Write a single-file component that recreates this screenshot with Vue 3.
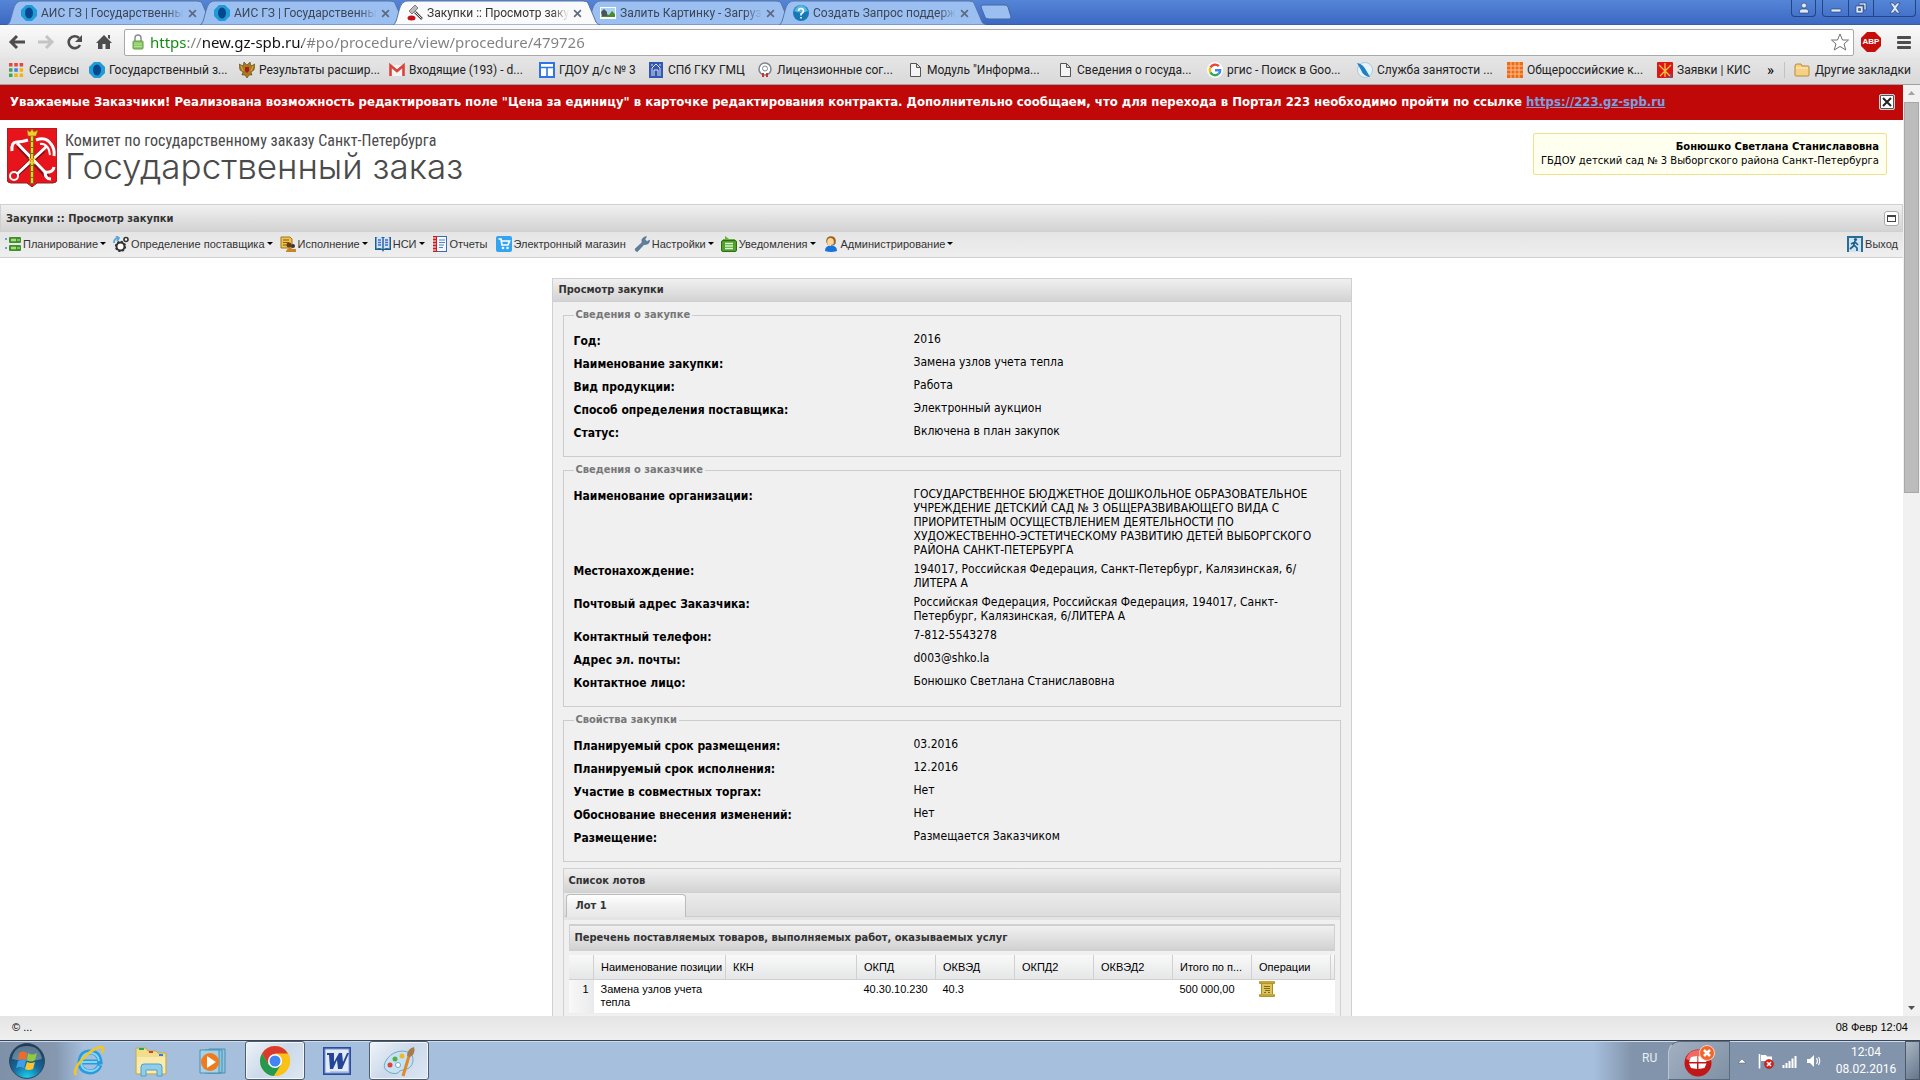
<template>
  <div class="screen">
    <header class="browser">
      <div class="tabstrip">
        <div v-for="(tab, i) in tabs" :key="i" class="tab" :class="{ active: tab.active }">
          <svg class="tab-shape" viewBox="0 0 207 25" preserveAspectRatio="none">
            <path d="M0 25C5 24 5 4 11 2Q12 1 15 1H190Q194 1 195 3L203 22Q204 24 207 25Z" />
          </svg>
          <svg class="ico" viewBox="0 0 16 16" v-html="icons[tab.icon]"></svg>
          <span class="tab-title">{{ tab.title }}</span>
          <button type="button" class="tab-close" aria-label="Закрыть">
            <svg viewBox="0 0 8 8"><path d="M1 1L7 7M7 1L1 7" /></svg>
          </button>
        </div>
        <button type="button" class="new-tab" aria-label="Новая вкладка">
          <svg viewBox="0 0 32 16">
            <path d="M3 1H25Q27 1 28 3L31 13Q31 15 29 15H9Q6 15 5 13L1 3Q1 1 3 1Z" />
          </svg>
        </button>
        <div class="window-controls">
          <button type="button" class="wc user" aria-label="Профиль">
            <svg viewBox="0 0 12 12"><circle cx="6" cy="3.5" r="2.5" /><path d="M1.5 11V9Q2 7 4 7H8Q10 7 10.500 9V11Z" /></svg>
          </button>
          <div class="wc-group">
            <button type="button" class="wc" aria-label="Свернуть">
              <svg viewBox="0 0 12 12"><rect x="1" y="7" width="10" height="3" rx="1" /></svg>
            </button>
            <button type="button" class="wc" aria-label="Восстановить">
              <svg viewBox="0 0 12 12"><path d="M4 1H11V8H9V3H4ZM1 4H8V11H1ZM3.500 6.500V8.500H5.500V6.500Z" fill-rule="evenodd" /></svg>
            </button>
            <button type="button" class="wc wide" aria-label="Закрыть окно">
              <svg viewBox="0 0 12 12"><path d="M1 1H4L6 3.500L8 1H11L7.500 6L11 11H8L6 8.500L4 11H1L4.500 6Z" /></svg>
            </button>
          </div>
        </div>
      </div>

      <div class="toolbar">
        <button type="button" class="nav" aria-label="Назад">
          <svg viewBox="0 0 18 16"><path d="M9 2L3 8L9 14M3 8H17" fill="none" stroke="#4d4d4d" stroke-width="3" /></svg>
        </button>
        <button type="button" class="nav" aria-label="Вперёд">
          <svg viewBox="0 0 18 16"><path d="M9 2L15 8L9 14M15 8H1" fill="none" stroke="#c4c4c4" stroke-width="3" /></svg>
        </button>
        <button type="button" class="nav" aria-label="Обновить">
          <svg viewBox="0 0 18 16"><path d="M14 11A6 6 0 1 1 13 4" fill="none" stroke="#4d4d4d" stroke-width="2.600" /><path d="M16 1V8H9Z" fill="#4d4d4d" /></svg>
        </button>
        <button type="button" class="nav" aria-label="Домой">
          <svg viewBox="0 0 18 16"><path d="M9 1L17 9H15V15H10.500V10H7.500V15H3V9H1ZM13 1H15V5L13 4Z" fill="#4d4d4d" /></svg>
        </button>
        <div class="omnibox">
          <svg class="lock" viewBox="0 0 12 16">
            <path d="M3 8V4Q3 1 6 1T9 4V8" fill="none" stroke="#8d8d8d" stroke-width="1.500" />
            <rect x="1" y="7" width="10" height="8" rx="1" fill="#8bcb66" stroke="#5b9d3c" />
            <path d="M2 10H10M2 12.500H10" stroke="#b6e09b" />
          </svg>
          <input class="url" type="text" aria-label="Адрес" value="https://new.gz-spb.ru/#po/procedure/view/procedure/479726" />
          <svg class="star" viewBox="0 0 20 18">
            <path d="M10 1L12.500 7H18.500L14 11L15.800 17L10 13.500L4.200 17L6 11L1.500 7H7.500Z" />
          </svg>
        </div>
        <button type="button" class="abp" aria-label="AdBlock"><span>ABP</span></button>
        <button type="button" class="burger" aria-label="Меню"><i></i><i></i><i></i></button>
      </div>

      <nav class="bookmarks">
        <a v-for="b in bookmarks" :key="b.title" href="#" class="bookmark" :class="b.size">
          <svg class="ico" viewBox="0 0 16 16" v-html="icons[b.icon]"></svg>
          <span>{{ b.title }}</span>
        </a>
        <button type="button" class="more">»</button>
        <a href="#" class="bookmark other">
          <svg class="ico" viewBox="0 0 16 16" v-html="icons.folder"></svg>
          <span>Другие закладки</span>
        </a>
      </nav>
    </header>

    <div class="viewport">
      <main class="page">
        <div class="notice">
          <p>
            Уважаемые Заказчики! Реализована возможность редактировать поле "Цена за единицу" в карточке
            редактирования контракта. Дополнительно сообщаем, что для перехода в Портал 223 необходимо пройти по
            ссылке <a href="#">https://223.gz-spb.ru</a>
          </p>
          <button type="button" class="notice-close" aria-label="Закрыть">
            <svg viewBox="0 0 10 10"><path d="M1 1L9 9M9 1L1 9" /></svg>
          </button>
        </div>

        <div class="brand">
          <svg class="emblem" viewBox="0 0 50 59">
            <path d="M0 0H50V51Q50 55 46 55H30L25 59L20 55H4Q0 55 0 51Z" fill="#e8141c" stroke="#8a2226" />
            <g fill="none" stroke="#7c1418" stroke-width="5">
              <path d="M11 17L41 49M37 22L9 47" />
            </g>
            <g fill="none" stroke="#fff" stroke-width="3">
              <path d="M10 15L38 44M40 18L10 46" />
              <path d="M5 23Q4 14 10 14Q15 14 21 12" />
              <path d="M29 12Q39 8 44 16Q48 21 47 28" />
              <path d="M33 16Q39 15 42 22L43 27" stroke-width="2" />
              <circle cx="7" cy="48" r="4" stroke-width="2" />
              <path d="M38 44Q38 51 44 51M38 44Q46 45 47 39" />
            </g>
            <path d="M25 8V56" stroke="#806b10" stroke-width="4" />
            <path d="M25 8V56" stroke="#f2cd2c" stroke-width="2" stroke-dasharray="5 1" />
            <path d="M20 2L23 4L25 1L27 4L31 2L29 8H21Z" fill="#f2cd2c" stroke="#8a6d0c" stroke-width=".6" />
            <path d="M22 30L28 36M28 30L22 36" stroke="#f2cd2c" stroke-width="1.500" />
          </svg>
          <div class="brand-text">
            <div class="brand-sub">Комитет по государственному заказу Санкт-Петербурга</div>
            <div class="brand-name">Государственный заказ</div>
          </div>
          <div class="user-card">
            <strong>Бонюшко Светлана Станиславовна</strong>
            <span>ГБДОУ детский сад № 3 Выборгского района Санкт-Петербурга</span>
          </div>
        </div>

        <div class="titlebar">
          <h1>Закупки :: Просмотр закупки</h1>
          <button type="button" class="tool" aria-label="Развернуть"><i></i></button>
        </div>

        <nav class="menu">
          <button v-for="m in menu" :key="m.title" type="button" class="menu-item" :class="{ drop: m.drop }">
            <svg class="ico" viewBox="0 0 16 16" v-html="icons[m.icon]"></svg>
            <span>{{ m.title }}</span>
          </button>
          <button type="button" class="menu-item exit">
            <svg class="ico" viewBox="0 0 16 16" v-html="icons.exit"></svg>
            <span>Выход</span>
          </button>
        </nav>

        <section class="panel">
          <h2 class="panel-head">Просмотр закупки</h2>
          <div class="panel-body">
            <fieldset v-for="g in groups" :key="g.title">
              <legend>{{ g.title }}</legend>
              <dl v-for="row in g.rows" :key="row[0]">
                <dt>{{ row[0] }}</dt>
                <dd>{{ row[1] }}</dd>
              </dl>
            </fieldset>

            <div class="lots">
              <h3 class="lots-head">Список лотов</h3>
              <div class="lots-tabs"><button type="button" class="lot-tab">Лот 1</button></div>
              <div class="lots-body">
                <h4 class="grid-head">Перечень поставляемых товаров, выполняемых работ, оказываемых услуг</h4>
                <table class="grid">
                  <colgroup>
                    <col class="c-num" /><col class="c-name" /><col class="c-kkn" />
                    <col v-for="n in 6" :key="n" class="c-code" /><col />
                  </colgroup>
                  <thead>
                    <tr>
                      <th></th>
                      <th v-for="c in columns" :key="c">{{ c }}</th>
                      <th></th>
                    </tr>
                  </thead>
                  <tbody>
                    <tr>
                      <td class="num">1</td>
                      <td>Замена узлов учета тепла</td>
                      <td></td>
                      <td>40.30.10.230</td>
                      <td>40.3</td>
                      <td></td>
                      <td></td>
                      <td>500 000,00</td>
                      <td class="ops"><svg class="ico" viewBox="0 0 16 16" v-html="icons.scroll"></svg></td>
                      <td></td>
                    </tr>
                  </tbody>
                </table>
              </div>
            </div>
          </div>
        </section>
      </main>
      <div class="scrollbar">
        <svg viewBox="0 0 17 17"><path d="M5 10L8.500 6L12 10Z" fill="#a3a3a3" /></svg>
        <div class="thumb"></div>
        <svg class="down" viewBox="0 0 17 17"><path d="M5 7L8.500 11L12 7Z" fill="#505050" /></svg>
      </div>
    </div>

    <footer class="status"><span>© ...</span><span>08 Февр 12:04</span></footer>

    <div class="taskbar">
      <button type="button" class="start" aria-label="Пуск">
        <svg viewBox="0 0 36 36" v-html="icons.start"></svg>
      </button>
      <button
        v-for="t in tasks"
        :key="t.icon"
        type="button"
        class="task"
        :class="{ open: t.open }"
        :aria-label="t.label"
      >
        <svg viewBox="0 0 32 32" v-html="icons[t.icon]"></svg>
      </button>
      <div class="tray">
        <span class="lang">RU</span>
        <button type="button" class="alert" aria-label="Уведомление">
          <svg viewBox="0 0 32 32" v-html="icons.alert"></svg>
        </button>
        <svg class="tray-ico" viewBox="0 0 16 16"><path d="M4 10L8 6L12 10Z" fill="#fff" stroke="#4c5a6b" stroke-width=".5" /></svg>
        <svg class="tray-ico" viewBox="0 0 16 16" v-html="icons.flag"></svg>
        <svg class="tray-ico" viewBox="0 0 16 16" v-html="icons.signal"></svg>
        <svg class="tray-ico" viewBox="0 0 16 16" v-html="icons.sound"></svg>
        <div class="clock"><span>12:04</span><span>08.02.2016</span></div>
        <button type="button" class="desktop" aria-label="Показать рабочий стол"></button>
      </div>
    </div>
  </div>
</template>

<script setup>
const page = '<path d="M3.500 1.500H9.500L13.500 5.500V14.500H3.500ZM9.500 1.500V5.500H13.500" fill="#f4f4f4" stroke="#555"/>';

const icons = {
  gz: '<path d="M5 0H11L16 5V11L11 16H5L0 11V5Z" fill="#1f9bd6"/><ellipse cx="8" cy="8" rx="4" ry="5.500" fill="#07478f"/>',
  gavel:
    '<path d="M8 7L15 14" stroke="#444" stroke-width="2.500"/><path d="M8 7L14.500 13.500" stroke="#eee" stroke-width="1"/><path d="M2 6L8 0L11 3L5 9Z" fill="#bbb" stroke="#666" stroke-width=".8"/><ellipse cx="4.500" cy="13" rx="4" ry="2.500" fill="#c8101a"/>',
  picture:
    '<rect y="2" width="16" height="12" fill="#fff"/><rect x="1" y="3" width="14" height="9" fill="#a8d3f3"/><path d="M1 12L5 8L9 10L12 6L15 9V12Z" fill="#4a8c2d"/><path d="M1 7L4 4L7 7V11H2Z" fill="#4a5362"/>',
  help:
    '<circle cx="8" cy="8" r="8" fill="#1679b5"/><path d="M1 6Q4 0 8 0T15 6Q8 9 1 6Z" fill="#55b9df"/><path d="M5.500 6Q5.500 3.500 8 3.500T10.500 6Q10.500 7.500 8 9V10.500M8 12V13.500" fill="none" stroke="#fff" stroke-width="1.600"/>',
  apps:
    '<path d="M1 1h3.500v3.500h-3.500zM6.300 1h3.500v3.500h-3.500zM11.600 1h3.500v3.500h-3.500z" fill="#e8453c"/><path d="M1 6.300h3.500v3.500h-3.500zM1 11.600h3.500v3.500h-3.500z" fill="#3aa757"/><path d="M6.300 6.300h3.500v3.500h-3.500z" fill="#3d7ff0"/><path d="M11.600 6.300h3.500v3.500h-3.500zM6.300 11.600h3.500v3.500h-3.500zM11.600 11.600h3.500v3.500h-3.500z" fill="#f5b400"/>',
  eagle:
    '<path d="M8 3L5 0L4 4L0 2L1 8L4 10L3 13H6L8 16L10 13H13L12 10L15 8L16 2L12 4L11 0Z" fill="#a67c1d" stroke="#5d430d" stroke-width=".6"/><path d="M6 5H10V9L8 11L6 9Z" fill="#b5161b"/><path d="M2 4L4 9M14 4L12 9" stroke="#e0bd57" stroke-width=".8"/>',
  gmail: '<path d="M1 3H15V14H1Z" fill="#f4f4f4"/><path d="M1.500 14V3.500L8 9L14.500 3.500V14" fill="none" stroke="#d9453a" stroke-width="2.600"/>',
  table: '<rect x="1" y="1" width="14" height="14" fill="#fff" stroke="#2f73e6" stroke-width="2"/><path d="M1 5.500H15M8 5.500V15" stroke="#2f73e6" stroke-width="1.600"/>',
  gmc: '<rect x="1" width="14" height="16" fill="#3458b0"/><path d="M4 14V6L8 2L12 6V14M6 14V8H10V14M3 3H5M11 3H13" fill="none" stroke="#dce4f6"/>',
  license:
    '<circle cx="8" cy="7" r="6" fill="#fff" stroke="#7b8692" stroke-width="1.500"/><circle cx="8" cy="6.500" r="2.500" fill="none" stroke="#7b8692"/><path d="M5 11H7V15H5ZM9 11H11V15H9Z" fill="#c93232"/>',
  page,
  google:
    '<circle cx="8" cy="8" r="8" fill="#fff"/><g fill="none" stroke-width="2.400"><path d="M11.800 4.200A5.200 5.200 0 0 0 3.400 5.600" stroke="#ea4335"/><path d="M3.400 5.600A5.200 5.200 0 0 0 3.400 10.400" stroke="#fbbc05"/><path d="M3.400 10.400A5.200 5.200 0 0 0 11.500 11.900" stroke="#34a853"/><path d="M11.500 11.900Q13.200 10.500 13.200 8.200H8" stroke="#4285f4"/></g>',
  job: '<circle cx="8" cy="8" r="7.500" fill="#e8f3f9" stroke="#a9cbe0"/><path d="M0 1Q6 2 9 8L13 15Q6 14 4 8Z" fill="#1d82c4"/>',
  orange: '<path d="M0 0H16V16H0Z" fill="#ee6c14"/><path d="M4 0V16M8 0V16M12 0V16M0 4H16M0 8H16M0 12H16" stroke="#ffd1ac" stroke-width=".8"/>',
  kis: '<rect width="16" height="16" rx="1" fill="#dd1717"/><path d="M2 3L13 14M14 3L3 14M8 1V15" stroke="#f6c543" stroke-width="1.300"/><path d="M14 12V16H9" fill="none" stroke="#2e78d0"/>',
  folder: '<path d="M1 4Q1 2 3 2H7L8 4H14Q15 4 15 5V13Q15 14 14 14H2Q1 14 1 13Z" fill="#f7d183" stroke="#b98a3a"/><path d="M2 6H14" stroke="#fff0c7"/>',
  plan:
    '<path d="M0 3H2M0 12H2" stroke="#3c8cc0" stroke-width="1.600"/><rect x="4" y="1" width="12" height="6" rx="1" fill="#3f8f2d"/><rect x="4" y="9" width="12" height="6" rx="1" fill="#3f8f2d"/><path d="M6 4H11M6 12H11" stroke="#a8dc7e" stroke-width="2.500"/><path d="M12 4H15M12 12H15" stroke="#cdeeb7"/>',
  gears:
    '<path d="M1 7Q1 2 5 2M3 0L6 2L4 5" fill="none" stroke="#5aa6d8" stroke-width="1.800"/><circle cx="7.500" cy="10.500" r="4" fill="#fff" stroke="#333" stroke-width="2"/><circle cx="7.500" cy="10.500" r="5" fill="none" stroke="#333" stroke-width="1.300" stroke-dasharray="2 1.900"/><circle cx="13" cy="3.500" r="2" fill="#fff" stroke="#333" stroke-width="1.600"/>',
  exec:
    '<path d="M1 1H10L12 3V12H1Z" fill="#ecc250" stroke="#a37719"/><path d="M3 4H9M3 6.500H9M3 9H7" stroke="#85600f"/><circle cx="9" cy="9" r="2.500" fill="#6b3b16"/><circle cx="13" cy="10" r="2" fill="#33373c"/><path d="M6 15Q9 10 12 13L16 13V16H6Z" fill="#c9852c"/>',
  book: '<path d="M0 1H16V14H9L8 16L7 14H0Z" fill="#19618c"/><path d="M1.500 1.500Q5 0 7.300 2V13Q5 11.500 1.500 12.500ZM14.500 1.500Q11 0 8.700 2V13Q11 11.500 14.500 12.500Z" fill="#d5e2ff"/><path d="M3 4H6M3 6.500H6M3 9H6M10 4H13M10 6.500H13M10 9H13" stroke="#4e6bb8" stroke-width="1.500"/>',
  report: '<rect x="2.500" y=".5" width="12" height="15" fill="#f4f8ff" stroke="#3d6cae"/><rect x="1" width="4" height="16" fill="#cc1c1c"/><path d="M0 2H4M0 5H4M0 8H4M0 11H4M0 14H4" stroke="#fff"/><path d="M7 4H13M7 6.500H13M7 9H12M7 11.500H11" stroke="#4f80c6"/>',
  shop: '<rect width="16" height="16" rx="2" fill="#32a4f2"/><path d="M2.500 3H5L6 9H12L13.500 5H5.500" fill="none" stroke="#fff" stroke-width="1.700"/><circle cx="7" cy="12" r="1.300" fill="#fff"/><circle cx="11.500" cy="12" r="1.300" fill="#fff"/>',
  wrench: '<path d="M1 13L8 6.500Q7 3 10 1.200L12.500 .5L11 3.500L13 5.500L15.800 4Q15.500 8 12 8.500L10 8.500L3.500 15.500Q1.500 16 1 13Z" fill="#5e7f9c" stroke="#4a6780" stroke-width=".5"/>',
  notify: '<path d="M4 0L8 3H14V5H2V3H4Z" fill="#6cae42"/><rect x=".5" y="4.500" width="15" height="11" rx="1.500" fill="#4fa02c" stroke="#2c6e16"/><path d="M4 7.500H12M4 10H12M4 12.500H12" stroke="#e0f5d3" stroke-width="1.400"/>',
  admin: '<path d="M2 15Q2 9.500 8 9.500T14 15Q8 17 2 15Z" fill="#1672dd"/><circle cx="8" cy="5" r="4.800" fill="#9c6119"/><ellipse cx="7.500" cy="6" rx="3.300" ry="4" fill="#ffd59a"/><path d="M12 5V8L8 9.500" fill="none" stroke="#777"/>',
  exit: '<rect width="16" height="16" fill="#2a6b97"/><rect x="2" y="2" width="12" height="14" fill="#cfe3f0"/><circle cx="8.500" cy="3.500" r="1.600" fill="#1c5f8b"/><path d="M8 5L6.500 10L3 13M7 9L10 12V15M4 8L8 6L11 9" fill="none" stroke="#1c5f8b" stroke-width="1.700"/>',
  scroll: '<path d="M2 2H14V14H2Z" fill="#dcc35a"/><path d="M2.500 3V13M13.500 3V13" stroke="#a98c28"/><rect x="0" y="0" width="16" height="3" rx="1" fill="#b4942a"/><rect x="0" y="13" width="16" height="3" rx="1" fill="#b4942a"/><path d="M1 1H15M1 14H15" stroke="#d9bf58" stroke-width=".8"/><path d="M5 5.500H11M5 7.500H11M6 9.500H11M5 11.500H7M9 11.500H11" stroke="#6b520b" stroke-width=".8"/>',
  start:
    '<defs><radialGradient id="orb" cx=".5" cy="1" r=".9"><stop offset="0" stop-color="#19d7f5"/><stop offset=".5" stop-color="#17679b"/><stop offset="1" stop-color="#1b3d5c"/></radialGradient></defs><circle cx="18" cy="18" r="17.400" fill="url(#orb)" stroke="#2d4459"/><path d="M3 16Q5 3 18 3T33 16Q18 20 3 16Z" fill="#fff" opacity=".3"/><path d="M10 10Q14 7 18 10L17 17Q13 15 9 17Z" fill="#ee6b2b"/><path d="M19 10Q23 13 28 10L26 17Q22 20 18 17Z" fill="#94c83d"/><path d="M9 18Q13 16 17 18L15 25Q11 23 7 25Z" fill="#3f9fe4"/><path d="M18 19Q22 21 26 19L24 26Q20 28 16 26Z" fill="#fdc52c"/>',
  ie: '<path d="M8 17H24M27 20Q24 27 17 27Q7 26 7 17Q8 7 17 7Q26 7 27 17H12" fill="none" stroke="#2b9bdc" stroke-width="5"/><path d="M8 17H24M26 21Q23 26 17 26Q8 25 8 17Q9 8 17 8Q25 8 26 16" fill="none" stroke="#83d6fb" stroke-width="2"/><path d="M3 30Q0 26 7 17Q18 4 27 2Q32 2 29 8" fill="none" stroke="#f5c520" stroke-width="2.600"/>',
  explorer: '<path d="M1 3H11L13 6H21L23 8H31V29H1Z" fill="#f1de8c" stroke="#c7a94d"/><path d="M4 4H9" stroke="#2ba84a" stroke-width="2"/><path d="M14 7H18" stroke="#d63b28" stroke-width="2"/><path d="M24 10H28" stroke="#2f80d8" stroke-width="2"/><path d="M2 12H30V28H2Z" fill="#f8ebad"/><path d="M6 31V22Q6 19 9 19H24Q27 19 27 22V31H22V25H11V31Z" fill="#8fcdea" stroke="#4f9fc9"/>',
  wmp: '<path d="M12 4H28V28H12ZM8 5H25V28H8Z" fill="#8dc4df" stroke="#4b90b3"/><path d="M3 5H22V28H3Z" fill="#a6d2e7" stroke="#4b90b3"/><circle cx="13" cy="17" r="9" fill="#f27a1a"/><path d="M10 11L19 17L10 23Z" fill="#fff"/>',
  chrome: '<circle cx="16" cy="16" r="15" fill="#fbc116"/><path d="M3 8.500A15 15 0 0 1 29 8.500H16L9 19Z" fill="#d93c2e"/><path d="M3 8.500A15 15 0 0 0 15 31L22 20L16 16L9.500 19.500Z" fill="#249a50"/><path d="M29.300 9H16L22 20L15 31A15 15 0 0 0 29.300 9Z" fill="#fbc116"/><circle cx="16" cy="16" r="7" fill="#fff"/><circle cx="16" cy="16" r="5.500" fill="#4384f3"/>',
  word: '<rect x="2" y="2" width="28" height="28" fill="#2a4c9c"/><rect x="4" y="4" width="24" height="24" fill="#e2e9f7" stroke="#7f97cd"/><path d="M6 8H13L13 17L18 8H21L22 17L26 8H28L21 24H17L16 15L12 24H9L8 10H6Z" fill="#234597"/><path d="M9 27H27" stroke="#8ba1d4"/>',
  paint: '<path d="M3 25Q-1 21 4 14Q10 6 20 6Q31 7 30 16Q29 24 20 25Q16 25 15 28Q9 30 3 25Z" fill="#c6e2f3" stroke="#78a8c8"/><circle cx="7" cy="20" r="2.500" fill="#e24336"/><circle cx="12" cy="14" r="2.500" fill="#52b04b"/><circle cx="19" cy="11" r="2.500" fill="#f0b92a"/><circle cx="15" cy="20" r="2.500" fill="#fff" stroke="#78a8c8"/><path d="M20 31L26 11" stroke="#dd8a2c" stroke-width="3"/><path d="M24 11Q24 4 31 2Q33 9 27 12Z" fill="#a77b4e"/>',
  alert: '<circle cx="15" cy="18" r="13.500" fill="#c01818"/><path d="M3 14Q6 5 15 5T27 14Q15 20 3 14Z" fill="#ef6a63"/><path d="M8 12L14 11V17H6ZM15.500 11L21.500 12L23.500 17H15.500ZM6 18.500H14V24L8 23ZM15.500 18.500H23.500L21.500 23L15.500 24Z" fill="#fff"/><circle cx="24" cy="8" r="7.500" fill="#f0662c" stroke="#fbd3bd"/><path d="M21 5L27 11M27 5L21 11" stroke="#fff" stroke-width="2.500"/>',
  flag: '<path d="M1.500 1V15.500" stroke="#fff" stroke-width="1.600"/><path d="M3 2H8L9 3.500H14V9H8L7 8H3Z" fill="#fff"/><circle cx="11" cy="11" r="4.500" fill="#d9231d" stroke="#8f1512" stroke-width=".5"/><path d="M9 9L13 13M13 9L9 13" stroke="#fff" stroke-width="1.500"/>',
  signal: '<path d="M1.500 15V12M4.500 15V10M7.500 15V8M10.500 15V5.500M13.500 15V3" stroke="#fff" stroke-width="2"/>',
  sound: '<path d="M1 6H4L8 2V14L4 10H1Z" fill="#fff"/><path d="M10.500 5Q12.500 8 10.500 11M12.500 4Q15 8 12.500 12" fill="none" stroke="#fff" stroke-width="1.100"/>',
};

const tabs = [
  { title: "АИС ГЗ | Государственны", icon: "gz" },
  { title: "АИС ГЗ | Государственны", icon: "gz" },
  { title: "Закупки :: Просмотр заку", icon: "gavel", active: true },
  { title: "Залить Картинку - Загруз", icon: "picture" },
  { title: "Создать Запрос поддерж", icon: "help" },
];

const bookmarks = [
  { title: "Сервисы", icon: "apps", size: "short" },
  { title: "Государственный з...", icon: "gz" },
  { title: "Результаты расшир...", icon: "eagle" },
  { title: "Входящие (193) - d...", icon: "gmail" },
  { title: "ГДОУ д/с № 3", icon: "table", size: "medium" },
  { title: "СПб ГКУ ГМЦ", icon: "gmc", size: "medium" },
  { title: "Лицензионные сог...", icon: "license" },
  { title: 'Модуль "Информа...', icon: "page" },
  { title: "Сведения о госуда...", icon: "page" },
  { title: "ргис - Поиск в Goo...", icon: "google" },
  { title: "Служба занятости ...", icon: "job" },
  { title: "Общероссийские к...", icon: "orange" },
  { title: "Заявки | КИС", icon: "kis", size: "medium" },
];

const menu = [
  { title: "Планирование", icon: "plan", drop: true },
  { title: "Определение поставщика", icon: "gears", drop: true },
  { title: "Исполнение", icon: "exec", drop: true },
  { title: "НСИ", icon: "book", drop: true },
  { title: "Отчеты", icon: "report" },
  { title: "Электронный магазин", icon: "shop" },
  { title: "Настройки", icon: "wrench", drop: true },
  { title: "Уведомления", icon: "notify", drop: true },
  { title: "Администрирование", icon: "admin", drop: true },
];

const groups = [
  {
    title: "Сведения о закупке",
    rows: [
      ["Год:", "2016"],
      ["Наименование закупки:", "Замена узлов учета тепла"],
      ["Вид продукции:", "Работа"],
      ["Способ определения поставщика:", "Электронный аукцион"],
      ["Статус:", "Включена в план закупок"],
    ],
  },
  {
    title: "Сведения о заказчике",
    rows: [
      [
        "Наименование организации:",
        "ГОСУДАРСТВЕННОЕ БЮДЖЕТНОЕ ДОШКОЛЬНОЕ ОБРАЗОВАТЕЛЬНОЕ УЧРЕЖДЕНИЕ ДЕТСКИЙ САД № 3 ОБЩЕРАЗВИВАЮЩЕГО ВИДА С ПРИОРИТЕТНЫМ ОСУЩЕСТВЛЕНИЕМ ДЕЯТЕЛЬНОСТИ ПО ХУДОЖЕСТВЕННО-ЭСТЕТИЧЕСКОМУ РАЗВИТИЮ ДЕТЕЙ ВЫБОРГСКОГО РАЙОНА САНКТ-ПЕТЕРБУРГА",
      ],
      ["Местонахождение:", "194017, Российская Федерация, Санкт-Петербург, Калязинская, 6/ЛИТЕРА А"],
      ["Почтовый адрес Заказчика:", "Российская Федерация, Российская Федерация, 194017, Санкт-Петербург, Калязинская, 6/ЛИТЕРА А"],
      ["Контактный телефон:", "7-812-5543278"],
      ["Адрес эл. почты:", "d003@shko.la"],
      ["Контактное лицо:", "Бонюшко Светлана Станиславовна"],
    ],
  },
  {
    title: "Свойства закупки",
    rows: [
      ["Планируемый срок размещения:", "03.2016"],
      ["Планируемый срок исполнения:", "12.2016"],
      ["Участие в совместных торгах:", "Нет"],
      ["Обоснование внесения изменений:", "Нет"],
      ["Размещение:", "Размещается Заказчиком"],
    ],
  },
];

const columns = ["Наименование позиции", "ККН", "ОКПД", "ОКВЭД", "ОКПД2", "ОКВЭД2", "Итого по п...", "Операции"];

const tasks = [
  { icon: "ie", label: "Internet Explorer" },
  { icon: "explorer", label: "Проводник" },
  { icon: "wmp", label: "Проигрыватель" },
  { icon: "chrome", label: "Chrome", open: true },
  { icon: "word", label: "Word" },
  { icon: "paint", label: "Paint", open: true },
];
</script>

<style>
body {
  margin: 0;
  overflow: hidden;
}
</style>

<style scoped>
.screen {
  --ui: Roboto, "Noto Sans", sans-serif;
  --tahoma: "DejaVu Sans Condensed", "DejaVu Sans", sans-serif;
  --arial: "Liberation Sans", sans-serif;
  height: 100vh;
  display: flex;
  flex-direction: column;
  background: #fff;
  font: 11px/14px var(--tahoma);
  color: #000;
}

.screen * {
  box-sizing: border-box;
}

button {
  padding: 0;
  border: 0;
  background: none;
  font: inherit;
  color: inherit;
}

h1,
h2,
h3,
h4,
p,
dl,
dd {
  margin: 0;
  font-size: inherit;
}

svg {
  display: block;
  flex: none;
}

.ico {
  width: 16px;
  height: 16px;
}

/* browser chrome */
.browser {
  flex: none;
  font-family: var(--ui);
  font-size: 12px;
}

.tabstrip {
  display: flex;
  align-items: center;
  height: 25px;
  padding-left: 7px;
  background: linear-gradient(#5585d6, #3c69c4);
  border-bottom: 1px solid #3a5f9e;
}

.tab {
  position: relative;
  display: flex;
  align-items: center;
  gap: 4px;
  width: 207px;
  height: 25px;
  margin-right: -14px;
  padding: 2px 17px 0 14px;
  color: #3b4656;
}

.tab-shape {
  position: absolute;
  inset: 0;
  width: 100%;
  height: 100%;
  fill: #9bbff1;
  stroke: #5575a8;
}

.tab > :not(.tab-shape) {
  position: relative;
}

.tab.active {
  z-index: 1;
  color: #333;
}

.tab.active .tab-shape {
  fill: #fafafa;
}

.tab-title {
  flex: 1;
  white-space: nowrap;
  mask-image: linear-gradient(90deg, #000 88%, transparent);
}

.tab-close {
  width: 10px;
}

.tab-close svg {
  width: 9px;
  height: 9px;
  stroke: #5c6a80;
  stroke-width: 1.5;
}

.new-tab svg {
  width: 32px;
  height: 16px;
  margin-left: 8px;
  fill: #9bbff1;
  stroke: #4668a3;
}

.window-controls {
  display: flex;
  align-self: flex-start;
  gap: 6px;
  margin-left: auto;
  padding-right: 4px;
}

.wc-group {
  display: flex;
  border: 1px solid #234584;
  border-top: 0;
  border-radius: 0 0 4px 4px;
}

.wc {
  display: flex;
  align-items: center;
  justify-content: center;
  width: 25px;
  height: 16px;
}

.wc + .wc {
  border-left: 1px solid #234584;
}

.wc.user {
  height: 17px;
  border: 1px solid #234584;
  border-top: 0;
  border-radius: 0 0 4px 4px;
}

.wc.wide {
  width: 42px;
}

.wc svg {
  width: 12px;
  height: 12px;
  fill: #dfe9fa;
  stroke: #1c3766;
  stroke-width: 0.6;
}

.toolbar {
  display: flex;
  align-items: center;
  height: 33px;
  padding: 1px 8px 0 8px;
  background: linear-gradient(#fafafa, #e6e6e6);
}

.nav {
  width: 29px;
}

.nav svg {
  width: 18px;
  height: 16px;
}

.omnibox {
  flex: 1;
  display: flex;
  align-items: center;
  height: 27px;
  margin-right: 7px;
  padding: 0 3px 0 7px;
  border: 1px solid #a8a8a8;
  border-radius: 2px;
  background: #fff;
}

.lock {
  width: 12px;
  height: 16px;
  margin-right: 6px;
}

.url {
  flex: 1;
  height: 22px;
  padding: 0;
  border: 0;
  outline: 0;
  font: 15px/22px "Noto Sans", sans-serif;
  color: transparent;
  background: linear-gradient(90deg, #0b8a0b 36px, #808080 36px 53px, #111 53px 152px, #808080 152px);
  background-clip: text;
}

.star {
  width: 20px;
  height: 18px;
  fill: #fff;
  stroke: #707070;
}

.abp {
  width: 20px;
  height: 20px;
  background: #c70d0c;
  clip-path: polygon(30% 0, 70% 0, 100% 30%, 100% 70%, 70% 100%, 30% 100%, 0 70%, 0 30%);
  color: #fff;
  font: bold 8px/20px var(--arial);
}

.burger {
  display: grid;
  gap: 2px;
  width: 14px;
  margin: 0 1px 0 16px;
}

.burger i {
  height: 3px;
  border-radius: 1px;
  background: #4d4d4d;
}

.bookmarks {
  display: flex;
  align-items: center;
  height: 27px;
  padding: 0 9px 2px 8px;
  background: linear-gradient(#e5e5e5, #d9d9d9);
  border-bottom: 1px solid #a0a0a0;
}

.bookmark {
  display: flex;
  align-items: center;
  gap: 4px;
  width: 150px;
  color: #222;
  text-decoration: none;
  white-space: nowrap;
}

.bookmark.short {
  width: 81px;
}

.bookmark.medium {
  width: 109px;
}

.bookmark.other {
  width: auto;
  padding-left: 9px;
  border-left: 1px solid #c3c3c3;
}

.bookmark.other,
.bookmark.short {
  gap: 5px;
}

.more {
  margin-left: auto;
  padding-right: 10px;
  font-size: 15px;
}

/* page */
.viewport {
  flex: 1;
  display: flex;
  min-height: 0;
}

.page {
  flex: 1;
  min-width: 0;
  overflow: hidden;
}

.notice {
  display: flex;
  align-items: center;
  justify-content: space-between;
  height: 35px;
  padding: 0 8px 1px 10px;
  background: #c00808;
  color: #fff;
  font-size: 13px;
  font-weight: bold;
  white-space: nowrap;
}

.notice a {
  color: #7aa0e0;
}

.notice-close {
  width: 16px;
  height: 16px;
  padding: 2px;
  border: 1px solid #ccc;
  border-radius: 2px;
  background: #fff;
  box-shadow: inset 0 0 0 1px #555;
}

.notice-close svg {
  width: 10px;
  height: 10px;
  stroke: #222;
  stroke-width: 2;
}

.brand {
  display: flex;
  align-items: flex-start;
  height: 84px;
  padding: 8px 16px 0 7px;
}

.emblem {
  width: 50px;
  height: 59px;
}

.brand-text {
  flex: 1;
  margin-left: 8px;
  color: #4a4a4a;
  white-space: nowrap;
}

.brand-sub {
  font: 16px/26px "Roboto Condensed", Roboto, sans-serif;
}

.brand-name {
  font: 300 35px/24px Inter, Lato, sans-serif;
}

.user-card {
  display: flex;
  flex-direction: column;
  height: 42px;
  margin-top: 5px;
  padding: 6px 7px;
  border: 1px solid #f0e28c;
  border-radius: 2px;
  background: #fffff0;
  font-size: 10px;
  text-align: right;
  font-family: "DejaVu Sans", sans-serif;
}

.titlebar {
  display: flex;
  align-items: center;
  justify-content: space-between;
  height: 28px;
  padding: 1px 3px 0 5px;
  border: 1px solid #d0d0d0;
  background: linear-gradient(#f0f0f0, #d3d3d3);
  color: #333;
}

.tool {
  width: 15px;
  height: 15px;
  padding: 3px 2px;
  border: 1px solid #aaa;
  border-radius: 3px;
  background: #fff;
}

.tool i {
  display: block;
  height: 7px;
  border: 1px solid #444;
  border-top-width: 2px;
}

.menu {
  display: flex;
  align-items: center;
  height: 26px;
  padding: 0 5px 2px;
  background: linear-gradient(#e5e5e5, #efefef);
  border-bottom: 1px solid #d0d0d0;
  color: #333;
  font-family: var(--arial);
}

.menu-item {
  display: flex;
  align-items: center;
  gap: 2px;
  margin-right: 8px;
  white-space: nowrap;
}

.menu-item.drop {
  margin-right: 7px;
}

.menu-item.drop::after {
  content: "";
  border: 3px solid transparent;
  border-top-color: #000;
  border-bottom: 0;
}

.menu-item.exit {
  margin: 0 0 0 auto;
}

.panel {
  width: 800px;
  max-width: 100%;
  margin: 20px auto 0;
  border: 1px solid #d0d0d0;
  background: #f0f0f0;
}

.panel-head,
.lots-head,
.grid-head {
  border-bottom: 1px solid #d0d0d0;
  background: linear-gradient(#f0f0f0, #d3d3d3);
  color: #333;
  line-height: 23px;
}

.panel-head {
  padding-left: 6px;
  line-height: 22px;
}

.panel-body {
  padding: 0 10px 10px;
}

fieldset {
  margin: 6px 0 0;
  padding: 10px 10px 9px;
  border: 1px solid #ccc;
  min-width: 0;
}

legend {
  padding: 0 2px;
  color: #777;
  font-weight: bold;
}

dl {
  display: grid;
  grid-template-columns: 340px minmax(0, 410px);
  min-height: 23px;
  font-size: 12px;
}

dt {
  padding-top: 2px;
  font-weight: bold;
}

dd {
  padding-bottom: 5px;
}

.lots {
  margin-top: 6px;
  border: 1px solid #d0d0d0;
}

.lots-head {
  padding-left: 5px;
}

.lots-tabs {
  display: flex;
  height: 27px;
  padding: 1px 2px 0;
  background: linear-gradient(#ebebeb, #dcdcdc);
  border-bottom: 3px solid #e4e4e4;
  box-shadow: inset 0 -1px #ccc;
}

.lot-tab {
  width: 120px;
  padding-left: 9px;
  border: 1px solid #bbb;
  border-bottom: 0;
  border-radius: 4px 4px 0 0;
  background: linear-gradient(#fff, #f0f0f0 50%, #e8e8e8);
  color: #333;
  font-weight: bold;
  text-align: left;
}

.lots-body {
  padding: 4px 5px;
}

.grid-head {
  margin-bottom: 4px;
  padding-left: 5px;
  border: 1px solid #d0d0d0;
  border-width: 2px 1px;
}

.grid {
  width: 100%;
  table-layout: fixed;
  border-collapse: collapse;
  background: #fff;
  font-family: var(--arial);
}

.c-num {
  width: 25px;
}

.c-name {
  width: 132px;
}

.c-kkn {
  width: 131px;
}

.c-code {
  width: 79px;
}

th {
  height: 24px;
  padding: 0 0 0 7px;
  border-right: 1px solid #d0d0d0;
  border-bottom: 1px solid #d0d0d0;
  background: linear-gradient(#f9f9f9, #e5e6e7);
  font-weight: normal;
  text-align: left;
  white-space: nowrap;
}

td {
  padding: 3px 6px 4px 7px;
  border-bottom: 1px solid #ededed;
  line-height: 13px;
  vertical-align: top;
}

.num {
  padding-right: 5px;
  background: linear-gradient(90deg, #f8f8f8, #e9eaec);
  text-align: right;
}

.ops {
  padding-top: 1px;
}

.scrollbar {
  display: flex;
  flex-direction: column;
  width: 17px;
  background: #f1f1f1;
}

.scrollbar svg {
  width: 17px;
  height: 17px;
}

.thumb {
  height: 42%;
  margin: 0 1px;
  border: 1px solid #a8a8a8;
  background: #bcbcbc;
}

.down {
  margin-top: auto;
}

.status {
  display: flex;
  justify-content: space-between;
  flex: none;
  padding: 0 12px 2px;
  background: linear-gradient(#e5e5e5, #efefef);
  font-family: var(--arial);
  line-height: 22px;
}

/* taskbar */
.taskbar {
  flex: none;
  display: flex;
  height: 40px;
  border-top: 1px solid #3b4756;
  box-shadow: inset 0 1px #cbdaec;
  background: linear-gradient(90deg, #7f91a8, #8598b0 56px, #a6bfdd 84px, #a6bfdd 83%, #8294ab 85%);
}

.start {
  width: 59px;
  padding-left: 9px;
}

.start svg {
  width: 36px;
  height: 36px;
}

.task {
  display: flex;
  align-items: center;
  justify-content: center;
  width: 60px;
  margin-right: 2px;
}

.task.open {
  border: 1px solid #4e5d70;
  border-radius: 3px;
  background: linear-gradient(135deg, #eef3f9, #cbd9ea 50%, #dde7f2);
  box-shadow: inset 0 0 0 1px #f3f7fb;
}

.task svg {
  width: 32px;
  height: 32px;
}

.tray {
  display: flex;
  align-items: center;
  margin-left: auto;
  color: #fff;
  font: 12px/17px var(--ui);
}

.lang {
  width: 26px;
  margin-bottom: 4px;
  color: #e8eef5;
}

.alert {
  display: flex;
  align-items: center;
  justify-content: center;
  width: 62px;
  height: 100%;
  margin-right: 4px;
  border: 1px solid #5c6c80;
  border-left-color: #b8c5d4;
  border-radius: 12px 0 0 0;
  background: linear-gradient(135deg, #a2b0c1, #8090a4);
}

.alert svg {
  width: 32px;
  height: 32px;
}

.tray-ico {
  width: 16px;
  height: 16px;
  margin-right: 8px;
}

.clock {
  display: flex;
  flex-direction: column;
  width: 72px;
  margin-right: 3px;
  text-align: center;
}

.desktop {
  width: 15px;
  height: 100%;
  border: 1px solid #4a5869;
  background: linear-gradient(135deg, #a9b6c5, #66768a);
}
</style>
